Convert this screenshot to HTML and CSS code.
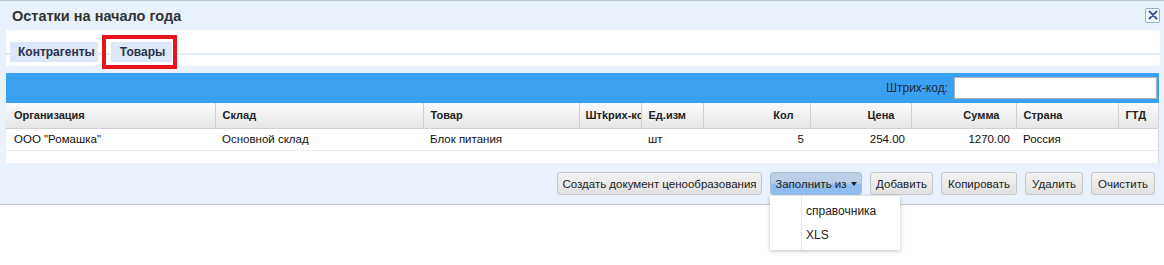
FILE: index.html
```html
<!DOCTYPE html>
<html lang="ru">
<head>
  <meta charset="UTF-8" />
  <title>Остатки на начало года</title>
  <link rel="stylesheet" href="styles.css">
</head>
<body>
  <div class="window">
    <div class="title-bar">
      <span class="title">Остатки на начало года</span>
      <span class="close-btn">
        <svg width="10" height="10" viewBox="0 0 10 10"><path d="M1.5 1.5 L8.5 8.5 M8.5 1.5 L1.5 8.5" stroke="#3d5c9c" stroke-width="2" stroke-linecap="round"/></svg>
      </span>
    </div>

    <!-- вкладки -->
    <div class="tab-panel">
      <div class="tab-strip">
        <a class="tab">Контрагенты</a>
        <a class="tab active">Товары<span class="mark"></span></a>
      </div>
    </div>

    <div class="toolbar">
      <label for="barcode">Штрих-код:</label>
      <input type="text" id="barcode">
    </div>

    <div class="grid">
      <table>
        <colgroup>
          <col style="width:209px"><col style="width:208px"><col style="width:156px"><col style="width:62px"><col style="width:62px">
          <col style="width:107px"><col style="width:101px"><col style="width:105px"><col style="width:102px"><col style="width:40px">
        </colgroup>
        <thead>
          <tr>
            <th>Организация</th>
            <th>Склад</th>
            <th>Товар</th>
            <th class="clip">Штkрих-код</th>
            <th>Ед.изм</th>
            <th class="num">Кол</th>
            <th class="num">Цена</th>
            <th class="num">Сумма</th>
            <th>Страна</th>
            <th>ГТД</th>
          </tr>
        </thead>
        <tbody>
          <tr>
            <td>ООО "Ромашка"</td>
            <td>Основной склад</td>
            <td>Блок питания</td>
            <td></td>
            <td>шт</td>
            <td class="num">5</td>
            <td class="num">254.00</td>
            <td class="num">1270.00</td>
            <td>Россия</td>
            <td></td>
          </tr>
        </tbody>
      </table>
    </div>

    <div class="buttons">
      <button class="btn-price">Создать документ ценообразования</button>
      <div class="dropdown">
        <button class="btn-fill pressed">Заполнить из <span class="caret"></span></button>
        <ul class="menu">
          <li>справочника</li>
          <li>XLS</li>
        </ul>
      </div>
      <button class="btn-add">Добавить</button>
      <button class="btn-copy">Копировать</button>
      <button class="btn-del">Удалить</button>
      <button class="btn-clear">Очистить</button>
    </div>
  </div>
</body>
</html>
```

FILE: styles.css
```css
* { box-sizing: border-box; margin: 0; padding: 0; }

body {
  font-family: "Liberation Sans", Arial, sans-serif;
  background: #fff;
  color: #111;
  min-height: 100vh;
}

.window {
  background: #e8f1fc;
  border-top: 1px solid #b9c6d6;
  border-bottom: 1px solid #c4c9cf;
  padding: 0 5px 9px 6px;
}

.title-bar {
  height: 29px;
  display: flex;
  align-items: center;
  justify-content: space-between;
  padding-left: 6px;
}
.title {
  font-size: 14.5px;
  font-weight: bold;
  color: #333;
}
.close-btn {
  width: 15px;
  height: 15px;
  margin-right: -1px;
  margin-top: -1px;
  border: 1px solid #97afd8;
  border-radius: 2px;
  background: #f4f8fe;
  display: flex;
  align-items: center;
  justify-content: center;
}

.tab-panel {
  background: #fff;
  height: 36px;
  padding-top: 12px;
  margin-bottom: 7px;
  margin-right: -1px;
}
.tab-strip {
  display: flex;
  gap: 13px;
  height: 20px;
  padding-left: 4px;
  background: linear-gradient(to bottom, transparent 11px, #e2edf9 11px, #e2edf9 13px, transparent 13px);
}
.tab {
  position: relative;
  display: flex;
  align-items: center;
  height: 20px;
  padding: 0 3px 0 8px;
  background: #dce8f7;
  font-size: 12px;
  font-weight: bold;
  color: #2b3050;
}
.tab.active { width: 61px; padding: 0 0 0 9px; }
.tab .mark {
  position: absolute;
  left: -9px;
  top: -7px;
  right: -5px;
  bottom: -7px;
  border: 4px solid #e8141c;
}

.toolbar {
  height: 30px;
  background: #3aa0f2;
  display: flex;
  align-items: center;
  justify-content: flex-end;
  padding-right: 2px;
  font-size: 12px;
  color: #1d2a3a;
}
.toolbar label { margin-right: 6px; }
.toolbar input {
  width: 203px;
  height: 22px;
  border: 1px solid #a9b4c0;
  background: #fff;
}

.grid {
  background: #fff;
  height: 60px;
  border-right: 1px solid #d4d4d4;
}
.grid table {
  border-collapse: collapse;
  table-layout: fixed;
  width: 1152px;
}
.grid th {
  height: 25px;
  padding: 0 16px 0 7px;
  text-align: left;
  font-size: 11px;
  font-weight: bold;
  color: #222;
  background: linear-gradient(to bottom, #fafafa, #e6e6e6);
  border-right: 1px solid #d0d0d0;
  border-bottom: 1px solid #d0d0d0;
  white-space: nowrap;
  overflow: hidden;
}
.grid th:first-child, .grid td:first-child { padding-left: 8px; }
.grid th:last-child { border-right: none; padding-right: 6px; }
.grid th.clip { padding-right: 0; padding-left: 6px; text-overflow: clip; }
.grid td {
  height: 22px;
  padding: 0 6px 0 7px;
  font-size: 11.5px;
  border-bottom: 1px solid #ececec;
  white-space: nowrap;
  overflow: hidden;
}
.grid .num { text-align: right; }

.buttons {
  display: flex;
  justify-content: flex-end;
  gap: 8px;
  padding: 9px 4px 0 0;
}
.buttons button {
  height: 23px;
  padding: 0;
  font-family: "Liberation Sans", Arial, sans-serif;
  font-size: 11.5px;
  color: #222;
  background: linear-gradient(to bottom, #f3f3f3, #e1e1e1);
  border: 1px solid #c6c6c6;
  border-radius: 3px;
}
.btn-price { width: 205px; }
.btn-fill { width: 92px; }
.btn-add { width: 63px; }
.btn-copy { width: 76px; }
.btn-del { width: 58px; }
.btn-clear { width: 64px; }
.buttons button.pressed {
  background: linear-gradient(to bottom, #bccfe6 0%, #bccfe6 45%, #8fbdf0 55%, #8fbdf0 100%);
  border-color: #a8bfd9;
}
.caret {
  display: inline-block;
  margin-left: 1px;
  vertical-align: 2px;
  border-left: 3px solid transparent;
  border-right: 3px solid transparent;
  border-top: 4px solid #222;
}

.dropdown { position: relative; }
.menu {
  position: absolute;
  left: 0;
  top: 24px;
  width: 130px;
  height: 54px;
  list-style: none;
  background: #fff linear-gradient(to right, transparent 31px, #e4e4e4 31px, #e4e4e4 32px, transparent 32px);
  box-shadow: 0 1px 4px rgba(0, 0, 0, 0.25);
  padding-top: 3px;
  font-size: 12px;
  color: #222;
}
.menu li {
  height: 24px;
  line-height: 24px;
  padding-left: 36px;
}
```
